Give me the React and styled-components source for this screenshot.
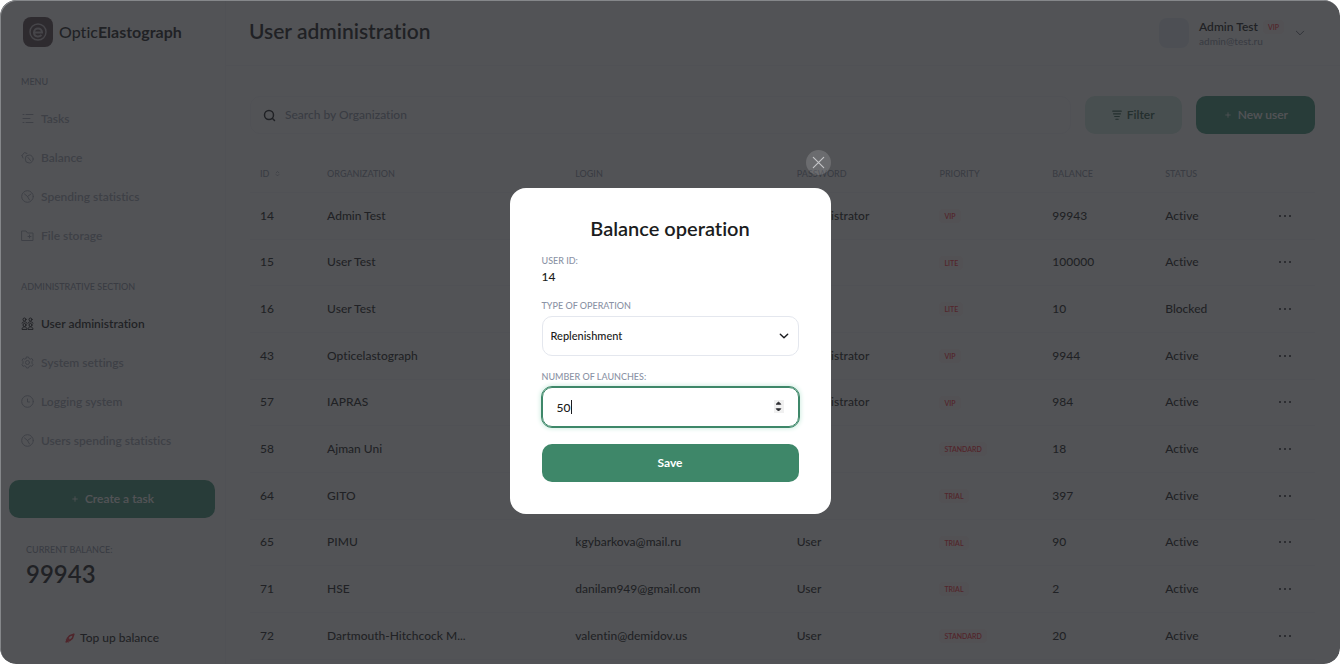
import React, { useState } from 'react';
import styled, { createGlobalStyle, css } from 'styled-components';

const MENU = [
  { label: 'Tasks', icon: 'tasks' },
  { label: 'Balance', icon: 'coins' },
  { label: 'Spending statistics', icon: 'pie' },
  { label: 'File storage', icon: 'folder' },
];

const ADMIN_MENU = [
  { label: 'User administration', icon: 'users', active: true },
  { label: 'System settings', icon: 'gear' },
  { label: 'Logging system', icon: 'clock' },
  { label: 'Users spending statistics', icon: 'pie' },
];

const USERS = [
  { id: 14, org: 'Admin Test', role: 'Administrator', priority: 'VIP', balance: 99943, status: 'Active' },
  { id: 15, org: 'User Test', priority: 'LITE', balance: 100000, status: 'Active' },
  { id: 16, org: 'User Test', priority: 'LITE', balance: 10, status: 'Blocked' },
  { id: 43, org: 'Opticelastograph', role: 'Administrator', priority: 'VIP', balance: 9944, status: 'Active' },
  { id: 57, org: 'IAPRAS', role: 'Administrator', priority: 'VIP', balance: 984, status: 'Active' },
  { id: 58, org: 'Ajman Uni', priority: 'STANDARD', balance: 18, status: 'Active' },
  { id: 64, org: 'GITO', priority: 'TRIAL', balance: 397, status: 'Active' },
  { id: 65, org: 'PIMU', login: 'kgybarkova@mail.ru', role: 'User', priority: 'TRIAL', balance: 90, status: 'Active' },
  { id: 71, org: 'HSE', login: 'danilam949@gmail.com', role: 'User', priority: 'TRIAL', balance: 2, status: 'Active' },
  { id: 72, org: 'Dartmouth-Hitchcock M...', login: 'valentin@demidov.us', role: 'User', priority: 'STANDARD', balance: 20, status: 'Active' },
];

const ICONS = {
  tasks: <path d="M2 2.500h1M5 2.500h7M2 6.500h7M2 10.500h1M5 10.500h7" />,
  coins: (
    <>
      <circle cx="8.200" cy="8" r="4" />
      <path d="M1 4.500 3.500 1.500 6 2.500M1 4.500l1 2.500M7 6.500l2.500 3" />
    </>
  ),
  pie: (
    <>
      <circle cx="6.500" cy="6.500" r="5.800" />
      <path d="M3.500 4 6.500 6.500 10 4M6.500 6.500l2 3.500" />
    </>
  ),
  folder: <path d="M1 2h4l1.500 2H12v7.500H1zM8.500 6v3M7 7.500h3" />,
  users: (
    <>
      <circle cx="3.500" cy="2.500" r="1.500" />
      <circle cx="9.500" cy="2.500" r="1.500" />
      <circle cx="3.500" cy="8" r="1.500" />
      <circle cx="9.500" cy="8" r="1.500" />
      <path d="M1 6.200c0-2 5-2 5 0M7 6.200c0-2 5-2 5 0M1 12c0-3 5-3 5 0zM7 12c0-3 5-3 5 0z" />
    </>
  ),
  gear: (
    <>
      <path d="M5.500 1h2l.5 1.500 1.500.6 1.300-.6 1.200 1.700-1 1.300v1.800l1 1.300-1.200 1.700-1.500-.5L8 10.500 7.500 12h-2L5 10.500l-1.500-.7-1.500.5L1 8.500l1-1.200V5.500L1 4.200 2.200 2.500l1.300.6L5 2.500z" />
      <circle cx="6.500" cy="6.500" r="2" />
    </>
  ),
  clock: (
    <>
      <circle cx="6.500" cy="6.500" r="5.800" />
      <path d="M6.500 4v3h2" />
    </>
  ),
  search: (
    <>
      <circle cx="6" cy="6" r="4.500" />
      <path d="m9.500 9.500 2 2" />
    </>
  ),
  filter: <path d="M1 1.500h11M2 5h9M3.500 8.500h6M5 12h3" />,
  plus: <path d="M6.500 3.500v6M3.500 6.500h6" />,
  chevron: <path d="m2.500 4.500 4 4 4-4" />,
  close: <path d="m2 2 9 9M11 2l-9 9" />,
  sort: <path d="m4.500 5.500 2-2 2 2M4.500 8l2 2 2-2" />,
  rocket: <path d="M1.500 11.500 5 8M3 7l3-3.500 5.500-2L9.500 7 6 10zM3 7l3 3M2 9l2 2.500" />,
  stepper: (
    <>
      <path d="m4.500 4 2-2 2 2z" />
      <path d="m4.500 9 2 2 2-2z" />
    </>
  ),
};

function Icon({ name, size = 13, width = 1, fill = 'none' }) {
  return (
    <Svg viewBox="0 0 13 13" $size={size} strokeWidth={width} fill={fill} aria-hidden="true">
      {ICONS[name]}
    </Svg>
  );
}

function MenuSection({ title, items }) {
  return (
    <section>
      <SectionTitle>{title}</SectionTitle>
      {items.map(item => (
        <MenuLink href="#" key={item.label} $active={item.active}>
          <Icon name={item.icon} />
          {item.label}
        </MenuLink>
      ))}
    </section>
  );
}

function UserTable() {
  return (
    <Table>
      <colgroup>
        <Col $width={6.3} />
        <Col $width={23.3} />
        <Col $width={20.8} />
        <Col $width={13.4} />
        <Col $width={10.6} />
        <Col $width={10.6} />
        <Col $width={8} />
        <Col />
      </colgroup>
      <thead>
        <tr>
          <Th>
            <SortLabel>
              ID <Icon name="sort" size={9} />
            </SortLabel>
          </Th>
          <Th>Organization</Th>
          <Th>Login</Th>
          <Th>Password</Th>
          <Th>Priority</Th>
          <Th>Balance</Th>
          <Th>Status</Th>
          <Th />
        </tr>
      </thead>
      <tbody>
        {USERS.map(user => (
          <Row key={user.id}>
            <Td>{user.id}</Td>
            <Td>{user.org}</Td>
            <Td>{user.login}</Td>
            <Td>{user.role}</Td>
            <Td>
              <Tag>{user.priority}</Tag>
            </Td>
            <Td>{user.balance}</Td>
            <Td>{user.status}</Td>
            <ActionsTd>
              <MoreButton aria-label={`Actions for user ${user.id}`}>
                <Dot />
                <Dot />
                <Dot />
              </MoreButton>
            </ActionsTd>
          </Row>
        ))}
      </tbody>
    </Table>
  );
}

function BalanceModal() {
  const [type, setType] = useState('Replenishment');
  const [launches, setLaunches] = useState('50');

  return (
    <Overlay>
      <Dialog role="dialog" aria-labelledby="balance-title">
        <CloseButton aria-label="Close">
          <Icon name="close" size={15} />
        </CloseButton>
        <Card onSubmit={e => e.preventDefault()}>
          <CardTitle id="balance-title">Balance operation</CardTitle>
          <Field>
            <Label as="span">User ID:</Label>
            <Value>14</Value>
          </Field>
          <Field>
            <Label htmlFor="type">Type of operation</Label>
            <Control>
              <Select id="type" value={type} onChange={e => setType(e.target.value)}>
                <option>Replenishment</option>
                <option>Write-off</option>
              </Select>
              <SelectArrow>
                <Icon name="chevron" size={12} width={1.5} />
              </SelectArrow>
            </Control>
          </Field>
          <Field>
            <Label htmlFor="launches">Number of launches:</Label>
            <Control>
              <NumberInput
                id="launches"
                type="number"
                value={launches}
                onChange={e => setLaunches(e.target.value)}
              />
              <Caret />
              <Stepper>
                <Icon name="stepper" fill="currentColor" />
              </Stepper>
            </Control>
          </Field>
          <SaveButton type="submit">Save</SaveButton>
        </Card>
      </Dialog>
    </Overlay>
  );
}

export default function App() {
  return (
    <>
      <GlobalStyle />
      <Page>
        <Sidebar>
          <Logo href="#">
            <LogoMark viewBox="0 0 30 30" aria-hidden="true">
              <rect width="30" height="30" rx="8" fill="#5c4a50" />
              <g fill="none" stroke="#c8c0c4" strokeWidth="1.400">
                <circle cx="15" cy="15" r="8" />
                <path d="M11 15.500h8c0-5.500-8-5.500-8 0 0 4.500 5 5 7.500 2.500" strokeWidth="2" />
              </g>
            </LogoMark>
            <span>
              Optic<b>Elastograph</b>
            </span>
          </Logo>
          <Nav>
            <MenuSection title="Menu" items={MENU} />
            <MenuSection title="Administrative section" items={ADMIN_MENU} />
          </Nav>
          <PrimaryButton>
            <Icon name="plus" size={10} />
            Create a task
          </PrimaryButton>
          <BalanceCard>
            <BalanceLabel>Current balance:</BalanceLabel>
            <BalanceValue>99943</BalanceValue>
            <TopUpButton>
              <RocketIcon>
                <Icon name="rocket" size={10} width={2} />
              </RocketIcon>
              Top up balance
            </TopUpButton>
          </BalanceCard>
        </Sidebar>
        <Main>
          <Header>
            <PageTitle>User administration</PageTitle>
            <Profile>
              <Avatar />
              <ProfileInfo>
                <ProfileName>
                  Admin Test <Tag>VIP</Tag>
                </ProfileName>
                <ProfileMail>admin@test.ru</ProfileMail>
              </ProfileInfo>
              <ProfileArrow>
                <Icon name="chevron" size={12} />
              </ProfileArrow>
            </Profile>
          </Header>
          <Content>
            <Toolbar>
              <SearchBox>
                <Icon name="search" width={1.5} />
                <SearchInput placeholder="Search by Organization" aria-label="Search by Organization" />
              </SearchBox>
              <FilterButton>
                <Icon name="filter" size={10} width={1.5} />
                Filter
              </FilterButton>
              <PrimaryButton>
                <Icon name="plus" size={10} />
                New user
              </PrimaryButton>
            </Toolbar>
            <UserTable />
          </Content>
        </Main>
        <BalanceModal />
      </Page>
    </>
  );
}

const GlobalStyle = createGlobalStyle`
  * {
    box-sizing: border-box;
  }
  body {
    margin: 0;
    background: #fff;
    color: #1b1c20;
    font: 500 12px/16px Lato, "Liberation Sans", sans-serif;
    font-variant-ligatures: none;
  }
  button, input, select {
    font: inherit;
    color: inherit;
  }
  button {
    border: 0;
    padding: 0;
    background: none;
    cursor: pointer;
  }
`;

const Page = styled.div`
  position: relative;
  display: flex;
  height: 100vh;
  border-radius: 16px;
  overflow: hidden;
`;

const Svg = styled.svg`
  flex: none;
  width: ${({ $size }) => $size}px;
  height: ${({ $size }) => $size}px;
  stroke: currentColor;
  stroke-linecap: round;
  stroke-linejoin: round;
`;

const Sidebar = styled.aside`
  flex: none;
  width: 226px;
  padding: 17px 10px 0 9px;
  border-right: 1px solid #f3f4f8;
  display: flex;
  flex-direction: column;
`;

const Logo = styled.a`
  display: flex;
  align-items: center;
  gap: 6px;
  padding: 0 14px;
  margin-bottom: 27px;
  color: inherit;
  text-decoration: none;
  font-size: 16px;
  white-space: nowrap;

  b {
    font-weight: 700;
  }
`;

const LogoMark = styled.svg`
  width: 30px;
  height: 30px;
`;

const Nav = styled.nav`
  display: flex;
  flex-direction: column;
  gap: 24px;
  margin-bottom: 20px;
`;

const caps = css`
  font-size: 9px;
  line-height: 16px;
  font-weight: 500;
  text-transform: uppercase;
`;

const SectionTitle = styled.h2`
  ${caps}
  margin: 0 0 9px;
  padding: 0 12px;
  color: #9097a8;
`;

const MenuLink = styled.a`
  display: flex;
  align-items: center;
  gap: 7px;
  height: 39px;
  padding: 0 12px;
  border-radius: 10px;
  color: ${({ $active }) => ($active ? '#1b1c20' : '#a4a9b6')};
  background: ${({ $active }) => ($active ? '#fff' : 'transparent')};
  font-weight: 600;
  text-decoration: none;
`;

const PrimaryButton = styled.button`
  display: flex;
  flex: none;
  align-items: center;
  justify-content: center;
  gap: 5px;
  height: 38px;
  padding: 0 27px;
  border-radius: 10px;
  background: #3f957a;
  color: #fff;
  font-weight: 600;
`;

const BalanceCard = styled.section`
  display: flex;
  flex-direction: column;
  padding: 24px 17px 0;
`;

const BalanceLabel = styled.span`
  ${caps}
  color: #9097a8;
`;

const BalanceValue = styled.strong`
  font-size: 24px;
  line-height: 32px;
  font-weight: 600;
`;

const TopUpButton = styled.button`
  display: flex;
  align-items: center;
  justify-content: center;
  gap: 5px;
  margin-top: 40px;
  height: 16px;
`;

const RocketIcon = styled.span`
  display: flex;
  color: #f0303c;
`;

const Main = styled.main`
  flex: 1;
  min-width: 0;
`;

const Header = styled.header`
  display: flex;
  align-items: center;
  justify-content: space-between;
  height: 66px;
  padding: 0 34px 0 23px;
  border-bottom: 1px solid #f3f4f8;
`;

const PageTitle = styled.h1`
  margin: 0;
  padding-bottom: 3px;
  font-size: 21px;
  line-height: 26px;
  font-weight: 600;
`;

const Profile = styled.div`
  display: flex;
  align-items: center;
  gap: 10px;
`;

const Avatar = styled.div`
  width: 30px;
  height: 30px;
  border-radius: 8px;
  background: #e6eef6;
`;

const ProfileInfo = styled.div`
  display: flex;
  flex-direction: column;
  padding-top: 2px;
`;

const ProfileName = styled.span`
  display: flex;
  align-items: center;
  gap: 5px;
  font-weight: 600;
`;

const ProfileMail = styled.span`
  color: #9097a8;
  font-size: 10px;
  line-height: 13px;
`;

const ProfileArrow = styled.span`
  display: flex;
  color: #5c606b;
`;

const Content = styled.div`
  padding: 30px 25px 0 24px;
`;

const Toolbar = styled.div`
  display: flex;
  gap: 14px;
`;

const SearchBox = styled.label`
  display: flex;
  flex: 1;
  align-items: center;
  gap: 9px;
  height: 38px;
  padding: 0 12px;
  border: 1px solid #f3f4f8;
  border-radius: 10px;
`;

const SearchInput = styled.input`
  flex: 1;
  padding: 0;
  border: 0;
  outline: 0;
  background: none;

  &::placeholder {
    color: #9097a8;
  }
`;

const FilterButton = styled(PrimaryButton)`
  background: #cfeae2;
  color: #2c5a49;
`;

const Table = styled.table`
  width: 100%;
  margin-top: 22px;
  border-collapse: collapse;
  table-layout: fixed;
`;

const Col = styled.col`
  width: ${({ $width }) => ($width ? `${$width}%` : 'auto')};
`;

const Th = styled.th`
  ${caps}
  height: 36px;
  padding: 0 10px;
  border-bottom: 1px solid #f3f4f8;
  color: #9097a8;
  text-align: left;
`;

const SortLabel = styled.span`
  display: flex;
  align-items: center;
  gap: 4px;
`;

const Row = styled.tr`
  height: 47px;
  border-bottom: 1px solid #f3f4f8;

  &:nth-child(3n + 2) {
    height: 46px;
  }
`;

const Td = styled.td`
  padding: 0 10px;
  white-space: nowrap;
`;

const ActionsTd = styled(Td)`
  padding-right: 24px;
`;

const Tag = styled.span`
  display: inline-block;
  padding: 0 5px;
  border-radius: 4px;
  background: #fdf4f4;
  color: #ff3040;
  font-size: 7px;
  line-height: 14px;
  font-weight: 600;
  vertical-align: middle;
`;

const MoreButton = styled.button`
  display: flex;
  gap: 3px;
  margin-left: auto;
  padding: 8px 0;
`;

const Dot = styled.i`
  width: 2px;
  height: 2px;
  border-radius: 50%;
  background: #1b1c20;
`;

const Overlay = styled.div`
  position: absolute;
  inset: 0;
  display: flex;
  align-items: center;
  justify-content: center;
  border-radius: 16px;
  background: rgba(33, 35, 38, 0.78);
  box-shadow: inset 1px 1px 0 #85878a;
`;

const Dialog = styled.div`
  display: flex;
  flex-direction: column;
  align-items: flex-end;
  gap: 13px;
  width: 321px;
`;

const CloseButton = styled.button`
  display: flex;
  align-items: center;
  justify-content: center;
  width: 25px;
  height: 25px;
  border-radius: 50%;
  background: rgba(255, 255, 255, 0.15);
  color: #c4c5c8;
`;

const Card = styled.form`
  width: 100%;
  display: flex;
  flex-direction: column;
  padding: 27px 32px 32px;
  border-radius: 16px;
  background: #fff;
`;

const CardTitle = styled.h2`
  margin: 0 0 12px;
  font-size: 20px;
  line-height: 26px;
  font-weight: 600;
  text-align: center;
`;

const Field = styled.div`
  display: flex;
  flex-direction: column;
  margin-bottom: 13px;

  &:last-of-type {
    margin-bottom: 17px;
  }
`;

const Label = styled.label`
  ${caps}
  color: #8b93a5;
`;

const Value = styled.span`
  line-height: 16px;
`;

const Control = styled.div`
  position: relative;
  display: grid;
  margin-top: 2px;
`;

const Select = styled.select`
  appearance: none;
  width: 100%;
  height: 40px;
  padding: 0 8px;
  border: 1px solid #e4e7ee;
  border-radius: 10px;
  background: #fff;
  font-size: 11px;
`;

const SelectArrow = styled.span`
  position: absolute;
  top: 14px;
  right: 9px;
  display: flex;
  pointer-events: none;
`;

const NumberInput = styled.input`
  appearance: textfield;
  width: 100%;
  height: 40px;
  padding: 0 14px;
  border: 1px solid #3e8769;
  border-radius: 10px;
  outline: 1px solid #3e8769;
  box-shadow: 0 0 4px 2px #d4efe4;

  &::-webkit-inner-spin-button {
    appearance: none;
  }
`;

const Caret = styled.i`
  position: absolute;
  top: 13px;
  left: 29px;
  width: 1px;
  height: 14px;
  background: #1b1c20;
`;

const Stepper = styled.span`
  position: absolute;
  top: 13px;
  right: 15px;
  display: flex;
  justify-content: center;
  width: 10px;
  background: #f0f0f0;
  color: #2b2c30;
  pointer-events: none;
`;

const SaveButton = styled.button`
  height: 38px;
  border-radius: 10px;
  background: #3e8769;
  color: #fff;
  font-weight: 700;
`;
